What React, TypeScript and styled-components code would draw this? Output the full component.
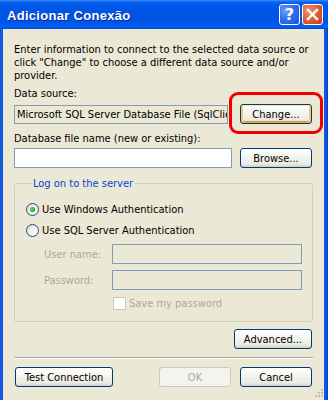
import React from 'react';
import styled, { createGlobalStyle } from 'styled-components';

const UI_FONT = `'DejaVu Sans Condensed', 'DejaVu Sans', sans-serif`;

const GlobalStyle = createGlobalStyle`
  html, body {
    margin: 0;
    padding: 0;
  }
  body {
    width: 328px;
    height: 400px;
    overflow: hidden;
    background: #0055e5;
  }
`;

const Window = styled.div`
  position: relative;
  width: 328px;
  height: 400px;
  display: flex;
  flex-direction: column;
  background: linear-gradient(90deg, #0a3cc8 0, #1f62e8 1px, #0055e5 3px, #0055e5 324px, #1a5ee6 325px, #0a3cc8 328px);
  font-family: ${UI_FONT};
  font-size: 11px;
  color: #000;
`;

const TitleBar = styled.div`
  height: 29px;
  flex: none;
  display: flex;
  align-items: center;
  gap: 2px;
  padding: 0 5px 0 7px;
  box-sizing: border-box;
  background: linear-gradient(
    180deg,
    #3b8cf8 0,
    #0a62f0 2px,
    #0058ee 5px,
    #0054e3 14px,
    #0055e8 22px,
    #0060f5 27px,
    #0048cf 29px
  );
`;

const Title = styled.div`
  flex: 1;
  padding-top: 2px;
  color: #fff;
  font: bold 13px 'Liberation Sans', Arial, sans-serif;
  letter-spacing: 0.3px;
  text-shadow: 1px 1px 0 #0b2a9a;
`;

const TitleButton = styled.div<{ $close?: boolean }>`
  width: 21px;
  height: 21px;
  box-sizing: border-box;
  display: flex;
  align-items: center;
  justify-content: center;
  border: 1px solid #fff;
  border-radius: 3px;
  color: #fff;
  font: bold 16px 'DejaVu Sans', sans-serif;
  background: ${(p) =>
    p.$close
      ? 'radial-gradient(circle at 30% 30%, #f0936f 0, #e2613b 45%, #c63a17 100%)'
      : 'radial-gradient(circle at 30% 30%, #6fa1fa 0, #2f6ff2 45%, #1a4fd6 100%)'};
`;

const Body = styled.div`
  position: relative;
  flex: 1;
  margin: 0 4px 0 3px;
  padding: 14px 11px 0 11px;
  display: flex;
  flex-direction: column;
  background: #ebe8d6;
`;

const Intro = styled.p`
  margin: 0;
  line-height: 13px;
`;

const Label = styled.div<{ $top: number; $muted?: boolean }>`
  margin-top: ${(p) => p.$top}px;
  line-height: 13px;
  color: ${(p) => (p.$muted ? '#aca899' : '#000')};
`;

const FieldRow = styled.div<{ $top: number }>`
  margin-top: ${(p) => p.$top}px;
  padding-right: 1px;
  height: 20px;
  display: flex;
  align-items: center;
  justify-content: space-between;
`;

const TextBox = styled.div<{ $width: number; $height?: number; $white?: boolean }>`
  width: ${(p) => p.$width}px;
  height: ${(p) => p.$height ?? 20}px;
  box-sizing: border-box;
  border: 1px solid #7f9db9;
  background: ${(p) => (p.$white ? '#fff' : '#ebe8d6')};
  padding: 0 2px;
  line-height: ${(p) => (p.$height ?? 20) - 2}px;
  white-space: nowrap;
  overflow: hidden;
`;

const Button = styled.button<{ $width: number; $focused?: boolean }>`
  width: ${(p) => p.$width}px;
  height: 20px;
  flex: none;
  padding: 0;
  box-sizing: border-box;
  font: 11px ${UI_FONT};
  color: #000;
  border: 1px solid #003c74;
  border-radius: 3px;
  background: linear-gradient(180deg, #ffffff 0, #f6f5f0 40%, #ecebe4 80%, #d8d2c6 100%);
  box-shadow: ${(p) =>
    p.$focused
      ? 'inset 0 1px 0 #ffe7a2, inset 2px 0 0 #f9c86a, inset -2px 0 0 #f9c86a, inset 0 -2px 0 #eb9d2e'
      : 'inset 0 -1px 0 #d6d0c5'};

  &:disabled {
    border-color: #cac8bb;
    color: #aca899;
    background: #f4f3ee;
    box-shadow: none;
  }
`;

const Group = styled.fieldset`
  margin: 9px 0 0 0;
  padding: 12px 10px 11px 11px;
  min-width: 0;
  border: 1px solid #d0d0bf;
  border-radius: 3px;
  display: flex;
  flex-direction: column;
`;

const GroupTitle = styled.legend`
  margin-left: 5px;
  padding: 0 2px;
  line-height: 13px;
  color: #0046d5;
`;

const RadioRow = styled.label<{ $top: number }>`
  margin-top: ${(p) => p.$top}px;
  height: 15px;
  display: flex;
  align-items: center;
  gap: 3px;
`;

const Radio = styled.span<{ $checked?: boolean }>`
  position: relative;
  width: 13px;
  height: 13px;
  box-sizing: border-box;
  border-radius: 50%;
  border: 1px solid #1c5180;
  background: radial-gradient(circle at 65% 65%, #ffffff 0, #f3f2ec 40%, #d4d0c4 100%);

  &::after {
    content: '';
    display: ${(p) => (p.$checked ? 'block' : 'none')};
    position: absolute;
    left: 3px;
    top: 3px;
    width: 5px;
    height: 5px;
    border-radius: 50%;
    background: radial-gradient(circle at 40% 40%, #6fe36f 0, #21a121 60%, #1a8a1a 100%);
  }
`;

const CredGrid = styled.div`
  margin-top: 6px;
  padding-left: 18px;
  display: grid;
  grid-template-columns: 68px 190px;
  row-gap: 6px;
  align-items: center;
`;

const CheckRow = styled.div`
  grid-column: 2;
  margin-top: 1px;
  display: flex;
  align-items: center;
  gap: 3px;
  color: #aca899;
`;

const CheckBox = styled.span`
  width: 13px;
  height: 13px;
  margin-left: 1px;
  box-sizing: border-box;
  border: 1px solid #cac8bb;
  background: #fff;
`;

const RightRow = styled.div<{ $top: number }>`
  margin-top: ${(p) => p.$top}px;
  padding-right: 1px;
  display: flex;
  justify-content: flex-end;
`;

const Separator = styled.div`
  margin-top: 8px;
  border-top: 1px solid #aca899;
  border-bottom: 1px solid #fff;
`;

const ButtonBar = styled.div`
  margin-top: 8px;
  padding: 0 1px;
  display: flex;
  align-items: center;
  gap: 9px;

  & > :first-child {
    margin-right: auto;
  }
`;

const Highlight = styled.div`
  position: absolute;
  left: 229px;
  top: 92px;
  width: 94px;
  height: 42px;
  box-sizing: border-box;
  border: 3px solid #f00000;
  border-radius: 9px;
  pointer-events: none;
`;

const Grip = styled.svg`
  position: absolute;
  right: 1px;
  bottom: 3px;
`;

const App: React.FC = () => {
  return (
    <>
      <GlobalStyle />
      <Window>
        <TitleBar>
          <Title>Adicionar Conexão</Title>
          <TitleButton>?</TitleButton>
          <TitleButton $close>
            <svg width="13" height="13" viewBox="0 0 13 13">
              <path d="M2 2 L11 11 M11 2 L2 11" stroke="#fff" strokeWidth="2.4" strokeLinecap="square" />
            </svg>
          </TitleButton>
        </TitleBar>

        <Body>
          <Intro>
            Enter information to connect to the selected data source or click "Change" to choose a
            different data source and/or provider.
          </Intro>

          <Label $top={5}>Data source:</Label>
          <FieldRow $top={4}>
            <TextBox $width={214} $height={19}>
              Microsoft SQL Server Database File (SqlClient)
            </TextBox>
            <Button $width={72} $focused>
              Change...
            </Button>
          </FieldRow>

          <Label $top={8}>Database file name (new or existing):</Label>
          <FieldRow $top={3}>
            <TextBox $width={218} $white />
            <Button $width={72}>Browse...</Button>
          </FieldRow>

          <Group>
            <GroupTitle>Log on to the server</GroupTitle>
            <RadioRow $top={0}>
              <Radio $checked />
              Use Windows Authentication
            </RadioRow>
            <RadioRow $top={6}>
              <Radio />
              Use SQL Server Authentication
            </RadioRow>
            <CredGrid>
              <Label $top={0} $muted>
                User name:
              </Label>
              <TextBox $width={190} />
              <Label $top={0} $muted>
                Password:
              </Label>
              <TextBox $width={190} />
              <CheckRow>
                <CheckBox />
                Save my password
              </CheckRow>
            </CredGrid>
          </Group>

          <RightRow $top={7}>
            <Button $width={78}>Advanced...</Button>
          </RightRow>

          <Separator />

          <ButtonBar>
            <Button $width={98}>Test Connection</Button>
            <Button $width={72} disabled>
              OK
            </Button>
            <Button $width={72}>Cancel</Button>
          </ButtonBar>

          <Grip width="9" height="9" viewBox="0 0 9 9">
            {[
              [7, 1],
              [7, 4],
              [4, 4],
              [7, 7],
              [4, 7],
              [1, 7],
            ].map(([x, y]) => (
              <rect key={`${x}-${y}`} x={x} y={y} width="2" height="2" fill="#c5c2b2" />
            ))}
          </Grip>
        </Body>

        <Highlight />
      </Window>
    </>
  );
};

export default App;
